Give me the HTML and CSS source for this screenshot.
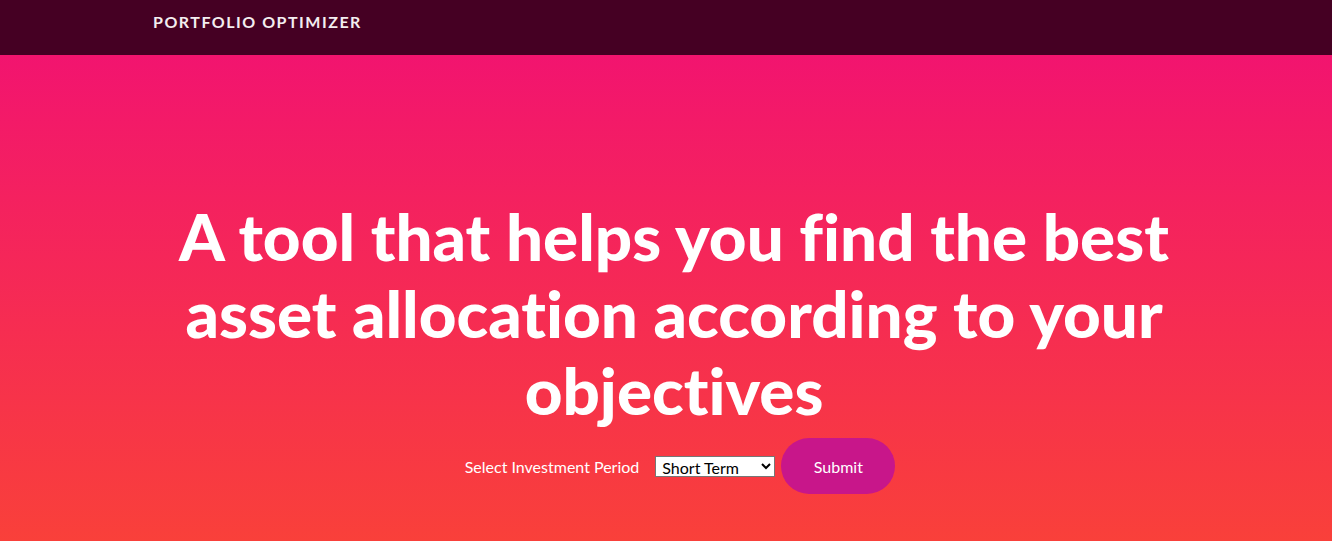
FILE: index.html
```html
<!DOCTYPE html>
<html lang="en">
<head>
<meta charset="utf-8">
<title>Portfolio Optimizer</title>
<link rel="stylesheet" href="styles.css">
</head>
<body>
<nav class="navbar">
  <div class="nav-inner">
    <a class="brand" href="#">Portfolio Optimizer</a>
  </div>
</nav>
<header class="hero">
  <h1 class="hero-title">A tool that helps you find the best asset allocation according to your objectives</h1>
  <form class="hero-form">
    <label class="form-label" for="period">Select Investment Period</label>
    <select class="form-select" id="period">
      <option>Short Term</option>
      <option>Medium Term</option>
      <option>Long Term</option>
    </select>
    <button type="button" class="btn-submit">Submit</button>
  </form>
</header>
</body>
</html>
```

FILE: styles.css
```css
* { box-sizing: border-box; }
html, body { margin: 0; padding: 0; }
body {
  font-family: "Lato", "Liberation Sans", sans-serif;
  background: #f9403a;
  font-variant-ligatures: none;
}
.navbar {
  background: #450023;
  height: 55px;
}
.nav-inner {
  padding-left: 153px;
  padding-top: 12px;
}
.brand {
  color: #f3eef0;
  text-decoration: none;
  text-transform: uppercase;
  font-weight: 700;
  font-size: 16px;
  letter-spacing: 1.5px;
}
.hero {
  height: 486px;
  background: linear-gradient(to bottom, #f2146f 0%, #f9403a 100%);
  display: flex;
  flex-direction: column;
  align-items: center;
  padding-top: 142px;
}
.hero-title {
  margin: 0;
  width: 1026px;
  padding-left: 16px;
  text-align: center;
  color: #fff;
  font-weight: 900;
  font-size: 65.5px;
  line-height: 77px;
  letter-spacing: 0;
  font-variant-ligatures: none;
}
.hero-form {
  display: flex;
  align-items: center;
  margin-top: 10px;
  padding-left: 28px;
}
.form-label {
  color: #fff;
  font-size: 16px;
  margin-right: 16px;
}
.form-select {
  font-family: "Lato", sans-serif;
  font-size: 16px;
  width: 120px;
  height: 21px;
  border: 1px solid #767676;
  border-radius: 0;
  background: #fff;
  color: #000;
  padding: 0 2px;
}
.btn-submit {
  margin-left: 6px;
  width: 114px;
  height: 56px;
  border: none;
  border-radius: 28px;
  background: #c8168a;
  color: #fff;
  font-family: "Lato", sans-serif;
  font-size: 16px;
  cursor: pointer;
}
```
